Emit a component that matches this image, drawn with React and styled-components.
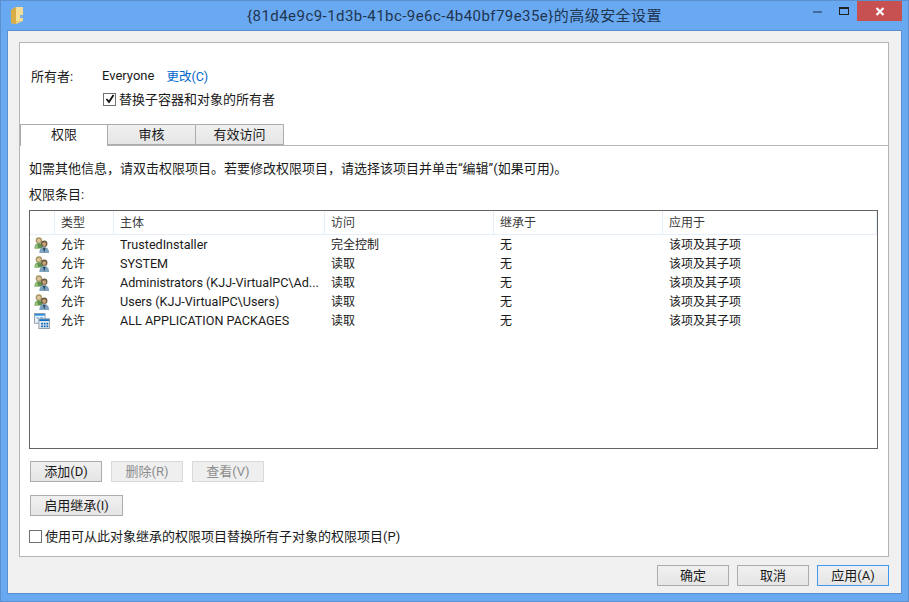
import React from "react";
import styled, { createGlobalStyle } from "styled-components";

const Global = createGlobalStyle`
  html, body { margin: 0; padding: 0; }
  body {
    font-family: Roboto, "Noto Sans CJK SC", sans-serif;
    font-size: 13px;
    color: #1a1a1a;
  }
  * { box-sizing: border-box; }
`;

const Win = styled.div`
  width: 909px;
  height: 602px;
  overflow: hidden;
  background: #69a9f2;
  border: 1px solid #5b8fd0;
  display: flex;
  flex-direction: column;
  padding: 0 6px 7px;
`;

const TitleBar = styled.div`
  height: 29px;
  flex: none;
  position: relative;
  display: flex;
  align-items: center;
  justify-content: center;
  margin: 0 -6px;
  padding-bottom: 2px;
`;

const Title = styled.div`
  font-size: 15px;
  letter-spacing: 0.45px;
  color: #1f3550;
`;

const AppIcon = styled.svg`
  position: absolute;
  left: 10px;
  top: 6px;
`;

const Controls = styled.div`
  position: absolute;
  right: 6px;
  top: 0;
  display: flex;
  align-items: flex-start;
`;

const CtlBtn = styled.div`
  width: ${(p) => p.$w}px;
  height: 20px;
  display: flex;
  align-items: center;
  justify-content: center;
  padding-right: ${(p) => p.$pr || 0}px;
  background: ${(p) => p.$bg || "transparent"};
`;

const Client = styled.div`
  flex: 1;
  background: #f0f0f0;
  border: 1px solid #5b8fd0;
  display: flex;
  flex-direction: column;
  padding: 11px 12px 0 11px;
`;

const Panel = styled.div`
  height: 515px;
  flex: none;
  background: #fff;
  border: 1px solid #b5b5b5;
  display: flex;
  flex-direction: column;
`;

const OwnerRow = styled.div`
  display: flex;
  align-items: center;
  height: 18px;
  margin: 23px 0 0 11px;
`;

const OwnerLabel = styled.span`
  width: 71px;
`;

const OwnerLink = styled.span`
  color: #0066cc;
  margin-left: 12px;
  font-size: 12.5px;
`;

const CheckRow = styled.label`
  display: flex;
  align-items: center;
  gap: 3px;
  height: 18px;
  margin-left: ${(p) => p.$left}px;
  margin-top: ${(p) => p.$top}px;
`;

const CheckText = styled.span`
  padding-bottom: 2px;
`;

const Box = styled.span`
  width: 13px;
  height: 13px;
  flex: none;
  border: 1px solid #707070;
  background: #fff;
  display: flex;
  align-items: center;
  justify-content: center;
`;

const Tabs = styled.div`
  display: flex;
  height: 22px;
  margin-top: 16px;
  border-bottom: 1px solid #b5b5b5;
`;

const Tab = styled.div`
  width: 88px;
  height: ${(p) => (p.$active ? 22 : 21)}px;
  display: flex;
  align-items: center;
  justify-content: center;
  padding-bottom: ${(p) => (p.$active ? 4 : 3)}px;
  background: ${(p) => (p.$active ? "#fff" : "linear-gradient(#f0f0f0, #e5e5e5)")};
  border: 1px solid #acacac;
  border-left-width: ${(p) => (p.$first ? 1 : 0)}px;
  border-bottom-width: ${(p) => (p.$active ? 0 : 1)}px;
  position: relative;
  z-index: ${(p) => (p.$active ? 1 : 0)};
`;

const Body = styled.div`
  flex: 1;
  display: flex;
  flex-direction: column;
  padding: 14px 10px 0 9px;
`;

const Line = styled.div`
  height: 18px;
  line-height: 18px;
  margin-bottom: ${(p) => p.$mb || 0}px;
`;

const Table = styled.div`
  height: 239px;
  margin-top: 6px;
  border: 1px solid #646464;
  background: #fff;
  font-size: 12px;
`;

const Cols = "25px 59px 211px 169px 169px 1fr";

const Head = styled.div`
  display: grid;
  grid-template-columns: ${Cols};
  height: 24px;
  border-bottom: 1px solid #e5eef9;
`;

const HeadCell = styled.div`
  display: flex;
  align-items: center;
  padding: 0 0 2px 6px;
  border-right: 1px solid #e5eef9;
  color: #3a3a3a;
`;

const Row = styled.div`
  display: grid;
  grid-template-columns: ${Cols};
  height: 19px;
  align-items: center;
`;

const Cell = styled.div`
  padding: 0 0 ${(p) => (p.$size ? 0 : 2)}px 6px;
  white-space: nowrap;
  font-size: ${(p) => p.$size || 12}px;
`;

const IconCell = styled.div`
  padding-left: 4px;
  display: flex;
  align-items: center;
`;

const BtnRow = styled.div`
  display: flex;
  gap: 9px;
  margin: ${(p) => p.$mt}px 0 0 1px;
`;

const Btn = styled.div`
  width: ${(p) => p.$w || 72}px;
  height: 21px;
  display: flex;
  align-items: center;
  justify-content: center;
  padding-bottom: 2px;
  background: ${(p) => (p.$off ? "#efefef" : "linear-gradient(#f0f0f0, #e5e5e5)")};
  border: 1px solid ${(p) => (p.$off ? "#d9d9d9" : p.$focus ? "#3c9bf0" : "#acacac")};
  color: ${(p) => (p.$off ? "#8c8c8c" : "#1a1a1a")};
`;

const Footer = styled.div`
  display: flex;
  justify-content: flex-end;
  gap: 8px;
  margin-top: 8px;
`;

function Users() {
  return (
    <svg width="16" height="16" viewBox="0 0 18 18">
      <circle cx="5.5" cy="3.8" r="3.6" fill="#a89464" />
      <circle cx="5.5" cy="4.200" r="2.200" fill="#dcc79a" />
      <path d="M0.500 13c0-4 2-6 5-6s4.500 2 4.500 6z" fill="#5f9150" />
      <path d="M1 13c0-3 1-4.500 2.500-5L5 13z" fill="#95c078" />
      <circle cx="11.500" cy="7.500" r="3.600" fill="#6e5a3e" />
      <circle cx="11.500" cy="8" r="2.200" fill="#c9a67c" />
      <path d="M6 18c0-4.500 2-6.500 5.500-6.500s5.500 2 5.500 6.500z" fill="#7da3bf" />
      <path d="M10 12h3l-1.500 5.500z" fill="#28465c" />
    </svg>
  );
}

function Packages() {
  return (
    <svg width="16" height="16" viewBox="0 0 18 18">
      <rect x="0.500" y="0.500" width="12" height="11" fill="#e8f0f8" stroke="#8c98a3" />
      <rect x="1" y="1" width="11" height="2" fill="#2a8fe0" />
      <rect x="3" y="5" width="2" height="1" fill="#2a8fe0" />
      <rect x="7" y="5" width="3" height="1" fill="#2a8fe0" />
      <rect x="5.500" y="6.500" width="12" height="11" fill="#e3e8ec" stroke="#8c98a3" />
      <rect x="6" y="7" width="11" height="2" fill="#0f6cbd" />
      <rect x="8" y="11" width="2" height="2" fill="#0f6cbd" />
      <rect x="11" y="11" width="2" height="2" fill="#0f6cbd" />
      <rect x="14" y="11" width="2" height="2" fill="#0f6cbd" />
      <rect x="8" y="14" width="2" height="2" fill="#0f6cbd" />
      <rect x="11" y="14" width="2" height="2" fill="#0f6cbd" />
      <rect x="14" y="14" width="2" height="2" fill="#0f6cbd" />
    </svg>
  );
}

const rows = [
  ["TrustedInstaller", "完全控制", Users],
  ["SYSTEM", "读取", Users],
  ["Administrators (KJJ-VirtualPC\\Ad...", "读取", Users],
  ["Users (KJJ-VirtualPC\\Users)", "读取", Users],
  ["ALL APPLICATION PACKAGES", "读取", Packages],
];

export default function App() {
  return (
    <>
      <Global />
      <Win>
        <TitleBar>
          <AppIcon width="13" height="17" viewBox="0 0 13 17">
            <path d="M0 3l5-3h7v14l-7 3-5-1z" fill="#f0cf72" />
            <path d="M0 3l5-3v17l-5-1z" fill="#d9ad45" />
            <path d="M5 0h7v14H5z" fill="#f6de96" />
            <rect x="9" y="8" width="3" height="3" fill="#7fb4d8" />
          </AppIcon>
          <Title>{"{81d4e9c9-1d3b-41bc-9e6c-4b40bf79e35e}的高级安全设置"}</Title>
          <Controls>
            <CtlBtn $w={25} $pr={4}>
              <svg width="9" height="3"><rect width="9" height="2" y="1" fill="#44689a" /></svg>
            </CtlBtn>
            <CtlBtn $w={25}>
              <svg width="11" height="9" viewBox="0 0 11 9">
                <rect x="0.500" y="0.500" width="9" height="7" fill="none" stroke="#222" />
                <rect x="0" y="0" width="10" height="2" fill="#222" />
              </svg>
            </CtlBtn>
            <CtlBtn $w={45} $bg="#c75050">
              <svg width="10" height="9" viewBox="0 0 10 9">
                <path d="M1.500 1l7 7M8.500 1l-7 7" stroke="#fff" strokeWidth="2.200" />
              </svg>
            </CtlBtn>
          </Controls>
        </TitleBar>
        <Client>
          <Panel>
            <OwnerRow>
              <OwnerLabel>所有者:</OwnerLabel>
              <span>Everyone</span>
              <OwnerLink>更改(C)</OwnerLink>
            </OwnerRow>
            <CheckRow $left={83} $top={6}>
              <Box>
                <svg width="10" height="10" viewBox="0 0 10 10">
                  <path d="M1.500 5l2.500 3 4.500-7" fill="none" stroke="#111" strokeWidth="1.800" />
                </svg>
              </Box>
              <CheckText>替换子容器和对象的所有者</CheckText>
            </CheckRow>
            <Tabs>
              <Tab $active $first>权限</Tab>
              <Tab>审核</Tab>
              <Tab>有效访问</Tab>
            </Tabs>
            <Body>
              <Line $mb={8}>如需其他信息，请双击权限项目。若要修改权限项目，请选择该项目并单击“编辑”(如果可用)。</Line>
              <Line>权限条目:</Line>
              <Table>
                <Head>
                  <HeadCell />
                  <HeadCell>类型</HeadCell>
                  <HeadCell>主体</HeadCell>
                  <HeadCell>访问</HeadCell>
                  <HeadCell>继承于</HeadCell>
                  <HeadCell>应用于</HeadCell>
                </Head>
                {rows.map(([name, access, Icon]) => (
                  <Row key={name}>
                    <IconCell><Icon /></IconCell>
                    <Cell>允许</Cell>
                    <Cell $size={12.6}>{name}</Cell>
                    <Cell>{access}</Cell>
                    <Cell>无</Cell>
                    <Cell>该项及其子项</Cell>
                  </Row>
                ))}
              </Table>
              <BtnRow $mt={12}>
                <Btn>添加(D)</Btn>
                <Btn $off>删除(R)</Btn>
                <Btn $off>查看(V)</Btn>
              </BtnRow>
              <BtnRow $mt={13}>
                <Btn $w={93}>启用继承(I)</Btn>
              </BtnRow>
              <CheckRow $left={0} $top={11}>
                <Box />
                <CheckText>使用可从此对象继承的权限项目替换所有子对象的权限项目(P)</CheckText>
              </CheckRow>
            </Body>
          </Panel>
          <Footer>
            <Btn>确定</Btn>
            <Btn>取消</Btn>
            <Btn $focus>应用(A)</Btn>
          </Footer>
        </Client>
      </Win>
    </>
  );
}
